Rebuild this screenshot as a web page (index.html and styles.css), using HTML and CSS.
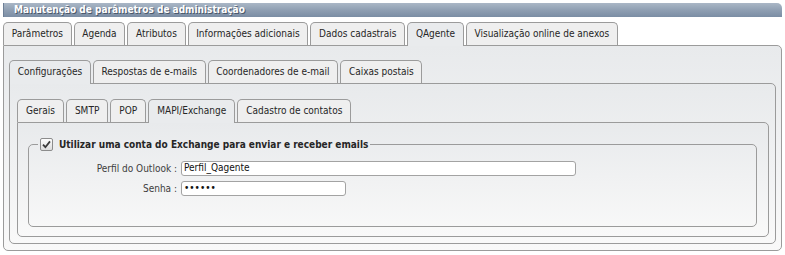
FILE: index.html
```html
<!DOCTYPE html>
<html lang="pt-BR">
<head>
  <meta charset="UTF-8">
  <title>Manutenção de parâmetros de administração</title>
  <link rel="stylesheet" href="styles.css">
</head>
<body>
  <div class="titlebar">Manutenção de parâmetros de administração</div>

  <div class="tabs">
    <div class="tab">Parâmetros</div>
    <div class="tab">Agenda</div>
    <div class="tab">Atributos</div>
    <div class="tab">Informações adicionais</div>
    <div class="tab">Dados cadastrais</div>
    <div class="tab active">QAgente</div>
    <div class="tab">Visualização online de anexos</div>
  </div>
  <div class="panel panel-1">
    <div class="tabs">
      <div class="tab active">Configurações</div>
      <div class="tab">Respostas de e-mails</div>
      <div class="tab">Coordenadores de e-mail</div>
      <div class="tab">Caixas postais</div>
    </div>
    <div class="panel panel-2">
      <div class="tabs">
        <div class="tab">Gerais</div>
        <div class="tab">SMTP</div>
        <div class="tab">POP</div>
        <div class="tab active">MAPI/Exchange</div>
        <div class="tab">Cadastro de contatos</div>
      </div>
      <div class="panel panel-3">
        <fieldset class="group">
          <legend>
            <span class="check">
              <svg width="9" height="9" viewBox="0 0 9 9"><path d="M1 4.6 L3.4 7.2 L8 1.4" fill="none" stroke="#3a3a3a" stroke-width="1.8"/></svg>
            </span>
            Utilizar uma conta do Exchange para enviar e receber emails
          </legend>
          <div class="form-row">
            <label for="perfil">Perfil do Outlook :</label>
            <input id="perfil" class="field field-long" type="text" value="Perfil_Qagente">
          </div>
          <div class="form-row">
            <label for="senha">Senha :</label>
            <input id="senha" class="field field-short" type="password" value="123456">
          </div>
        </fieldset>
      </div>
    </div>
  </div>
</body>
</html>
```

FILE: styles.css
```css
body {
  margin: 0;
  padding: 3px 3px 0 3px;
  background: #fff;
  font-family: "DejaVu Sans Condensed", "DejaVu Sans", sans-serif;
  font-stretch: condensed;
  font-size: 10px;
  color: #262626;
}
.titlebar {
  height: 14px;
  line-height: 14px;
  padding-left: 10px;
  background: linear-gradient(#aab7c6, #8d9db1 55%, #7b8da4);
  border-left: 1px solid #6d7f96;
  border-radius: 0 5px 0 0;
  color: #fff;
  font-weight: bold;
  text-shadow: 1px 1px 0 #4a586a;
}
.tabs {
  display: flex;
  gap: 2px;
  margin-top: 5px;
}
.tab {
  height: 22px;
  line-height: 22px;
  padding: 0 7.7px;
  border: 1px solid #9b9b9b;
  border-bottom: none;
  border-radius: 5px 5px 0 0;
  background: #efefef;
  white-space: nowrap;
}
.tab.active {
  background: #e9ebed;
  position: relative;
  margin-bottom: -1px;
  height: 23px;
}
.panel {
  border: 1px solid #9b9b9b;
  border-radius: 0 5px 5px 5px;
  background: linear-gradient(#e8eaec, #f9f9f9);
}
.panel .tabs {
  margin-top: 0;
}
.panel-1 {
  padding: 14px 5px 6px 5px;
}
.panel-2 {
  padding: 15px 6px 6px 7px;
}
.panel-2 > .tabs .tab {
  padding: 0 8px;
}
.panel-3 {
  padding: 14px 11px 9px 10px;
}
.group {
  margin: 0;
  padding: 0 0 30px 9px;
  border: 1px solid #9b9b9b;
  border-radius: 5px;
}
.group legend {
  padding: 0 2px;
  font-weight: bold;
  display: flex;
  align-items: center;
  gap: 6px;
  height: 14px;
}
.check {
  width: 11px;
  height: 11px;
  border: 1px solid #8c8c8c;
  border-radius: 2px;
  background: linear-gradient(#fdfdfd, #dcdcdc);
  display: flex;
  align-items: center;
  justify-content: center;
}
.form-row {
  display: grid;
  grid-template-columns: 139px auto;
  column-gap: 4px;
  align-items: center;
  margin-top: 5px;
}
.form-row:first-of-type {
  margin-top: 10px;
}
.form-row label {
  text-align: right;
  color: #3d3d3d;
}
.field {
  box-sizing: border-box;
  height: 15px;
  padding: 0 2px 2px 2px;
  line-height: 16px;
  border: 1px solid #a3a3a3;
  border-radius: 3px;
  background: #fff;
  font-family: inherit;
  font-stretch: condensed;
  font-size: 10px;
  color: #111;
  outline: none;
}
.field-long {
  width: 395px;
}
.field-short {
  width: 165px;
}
```
